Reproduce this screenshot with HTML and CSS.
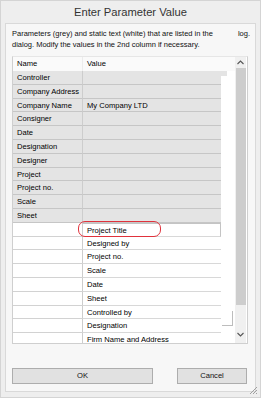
FILE: index.html
```html
<!DOCTYPE html>
<html>
<head>
<meta charset="utf-8">
<link rel="stylesheet" href="styles.css">
</head>
<body>
<div class="dialog">
  <div class="title">Enter Parameter Value</div>
  <div class="panel">
    <div class="desc">
      <div class="line first"><span>Parameters (grey) and static text (white) that are listed in the</span><span>log.</span></div>
      <div class="line">dialog. Modify the values in the 2nd column if necessary.</div>
    </div>
    <div class="grid">
      <div class="main">
        <div class="hdr">
          <div class="c name">Name</div>
          <div class="c val">Value</div>
          <div class="c fill"></div>
        </div>
        <div class="row par"><div class="c name">Controller</div><div class="c val"></div><div class="c fill"><span class="nub"></span></div></div>
        <div class="row par"><div class="c name">Company Address</div><div class="c val"></div><div class="c fill"></div></div>
        <div class="row par"><div class="c name">Company Name</div><div class="c val">My Company LTD</div><div class="c fill"></div></div>
        <div class="row par"><div class="c name">Consigner</div><div class="c val"></div><div class="c fill"></div></div>
        <div class="row par"><div class="c name">Date</div><div class="c val"></div><div class="c fill"></div></div>
        <div class="row par"><div class="c name">Designation</div><div class="c val"></div><div class="c fill"></div></div>
        <div class="row par"><div class="c name">Designer</div><div class="c val"></div><div class="c fill"></div></div>
        <div class="row par"><div class="c name">Project</div><div class="c val"></div><div class="c fill"></div></div>
        <div class="row par"><div class="c name">Project no.</div><div class="c val"></div><div class="c fill"></div></div>
        <div class="row par"><div class="c name">Scale</div><div class="c val"></div><div class="c fill"></div></div>
        <div class="row par"><div class="c name">Sheet</div><div class="c val"></div><div class="c fill"></div></div>
        <div class="row txt marked"><div class="c name"></div><div class="c val sel">Project Title</div><div class="c fill"></div><span class="mark"></span></div>
        <div class="row txt"><div class="c name"></div><div class="c val">Designed by</div><div class="c fill"></div></div>
        <div class="row txt"><div class="c name"></div><div class="c val">Project no.</div><div class="c fill"></div></div>
        <div class="row txt"><div class="c name"></div><div class="c val">Scale</div><div class="c fill"></div></div>
        <div class="row txt"><div class="c name"></div><div class="c val">Date</div><div class="c fill"></div></div>
        <div class="row txt"><div class="c name"></div><div class="c val">Sheet</div><div class="c fill"></div></div>
        <div class="row txt"><div class="c name"></div><div class="c val">Controlled by</div><div class="c fill"></div></div>
        <div class="row txt"><div class="c name"></div><div class="c val">Designation</div><div class="c fill"></div></div>
        <div class="row txt"><div class="c name"></div><div class="c val">Firm Name and Address</div><div class="c fill"></div></div>
        <span class="hbox"></span>
      </div>
      <div class="vscroll">
        <div class="arrow up"><svg width="7" height="5" viewBox="0 0 7 5"><path d="M0.5 4 L3.5 1 L6.5 4" fill="none" stroke="#555" stroke-width="1.1"/></svg></div>
        <div class="thumb"></div>
        <div class="track"></div>
        <div class="arrow down"><svg width="7" height="5" viewBox="0 0 7 5"><path d="M0.5 1 L3.5 4 L6.5 1" fill="none" stroke="#555" stroke-width="1.1"/></svg></div>
      </div>
    </div>
    <div class="buttons">
      <div class="btn ok">OK</div>
      <div class="btn cancel">Cancel</div>
    </div>
  </div>
  <svg class="grip" width="9" height="9" viewBox="0 0 9 9"><path d="M8 1 L1 8 M8 4 L4 8 M8 7 L7 8" stroke="#a0a0a0" stroke-width="1"/></svg>
</div>
</body>
</html>
```

FILE: styles.css
```css
html, body {
  margin: 0;
  padding: 0;
  background: #efefef;
}
body {
  width: 261px;
  height: 398px;
  overflow: hidden;
  font-family: "Liberation Sans", Arial, sans-serif;
  color: #111;
}
.dialog {
  position: relative;
  box-sizing: border-box;
  width: 261px;
  height: 398px;
  background: #eeeeee;
  border: 1px solid #d4d4d4;
  display: flex;
  flex-direction: column;
}
.title {
  height: 22px;
  line-height: 22px;
  text-align: center;
  font-size: 11.2px;
  color: #333;
}
.panel {
  flex: 1;
  margin: 0 4px 5px 4px;
  border: 1px solid #d9d9d9;
  background: #f7f7f7;
  padding: 4px 0 0 6px;
  display: flex;
  flex-direction: column;
}
.desc {
  font-size: 7.5px;
  line-height: 11px;
  color: #111;
  width: 238px;
}
.line {
  white-space: nowrap;
}
.line.first {
  display: flex;
  justify-content: space-between;
}
.grid {
  margin-top: 6px;
  width: 236px;
  height: 288px;
  box-sizing: border-box;
  border: 1px solid #cfcfcf;
  border-top-color: #e6e6e6;
  background: #ffffff;
  display: flex;
  overflow: hidden;
}
.main {
  position: relative;
  width: 222px;
  display: flex;
  flex-direction: column;
  overflow: hidden;
}
.hdr, .row {
  display: flex;
  flex: none;
  box-sizing: border-box;
  font-size: 7.6px;
  color: #000;
}
.hdr {
  height: 14px;
  line-height: 14px;
  background: #fafafa;
}
.row {
  height: 13.8px;
  line-height: 13px;
}
.row.marked {
  position: relative;
}
.c {
  box-sizing: border-box;
  white-space: nowrap;
  overflow: hidden;
}
.c.name {
  width: 69px;
  padding-left: 4px;
}
.c.val {
  width: 139px;
  padding-left: 4px;
  border-left: 1px solid #cdcdcd;
}
.hdr .c.val {
  border-left-color: #ececec;
}
.c.fill {
  width: 14px;
  position: relative;
}
.row.par .c.name,
.row.par .c.val {
  background: #e4e4e4;
  border-bottom: 1px solid #c6c6c6;
}
.row.txt .c.name {
  background: #ffffff;
  border-bottom: 1px solid #d2d2d2;
}
.row.txt .c.val {
  background: #ffffff;
  border-bottom: 1px solid #d8d8d8;
}
.c.val.sel {
  border: 1px solid #c4c4c4;
  border-left-color: #cdcdcd;
}
.mark {
  position: absolute;
  left: 65px;
  top: -2px;
  width: 83px;
  height: 16px;
  box-sizing: border-box;
  border: 1.5px solid #e0323c;
  border-radius: 7px;
}
.nub {
  position: absolute;
  left: 0;
  top: 0;
  width: 6px;
  height: 5px;
  background: #e4e4e4;
}
.hbox {
  position: absolute;
  left: 209px;
  top: 254px;
  width: 11px;
  height: 15px;
  box-sizing: border-box;
  background: #ffffff;
  border-right: 1px solid #bdbdbd;
  border-bottom: 1px solid #bdbdbd;
}
.vscroll {
  width: 11px;
  margin-right: 1px;
  background: #f0f0f0;
  display: flex;
  flex-direction: column;
}
.arrow {
  height: 11px;
  display: flex;
  align-items: center;
  justify-content: center;
}
.arrow svg {
  display: block;
}
.thumb {
  height: 237px;
  margin: 0 0 0 1px;
  background: #cdcdcd;
}
.track {
  flex: 1;
}
.arrow.down {
  height: 15px;
  align-items: flex-start;
  padding-top: 4px;
  box-sizing: border-box;
}
.buttons {
  margin-top: 24px;
  width: 235px;
  display: flex;
  justify-content: space-between;
}
.btn {
  height: 16px;
  box-sizing: border-box;
  border: 1px solid #adadad;
  background: #e1e1e1;
  font-size: 7.6px;
  line-height: 14px;
  text-align: center;
  color: #111;
}
.btn.ok {
  width: 141px;
}
.btn.cancel {
  width: 70px;
}
.grip {
  position: absolute;
  right: 2px;
  bottom: 2px;
}
```
